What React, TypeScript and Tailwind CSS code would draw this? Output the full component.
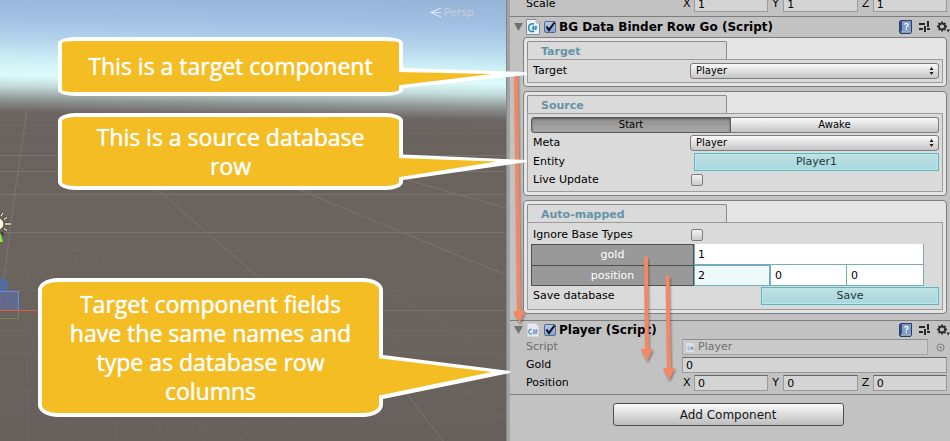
import { useId, type ReactNode } from "react";

const fieldClass =
  "h-4 w-full min-w-0 border border-[#9a9a9a] border-t-[#666666] bg-[#d4d4d4] px-[3px] text-[11px] leading-[14px] text-black outline-none";
const tealButton =
  "h-[18px] border border-[#5ab8bf] bg-linear-to-b from-[#c0dfe3] to-[#a6d9de] text-center text-[11px] leading-4 text-[#20393c] shadow-[inset_0_0_0_1px_#b9e8ea]";

function FoldoutArrow() {
  return (
    <svg width="9" height="8" viewBox="0 0 9 8" className="shrink-0" aria-hidden="true">
      <path d="M0 0H9L4.500 8Z" fill="#717171" />
    </svg>
  );
}

function ScriptIcon({ small = false }: { small?: boolean }) {
  return small ? (
    <svg width="12" height="14" viewBox="0 0 12 14" className="mx-px shrink-0" aria-hidden="true">
      <path d="M0.500 0.500H8.500L11.500 3.500V13.500H.5Z" fill="#e6eaee" stroke="#d2d6da" />
      <path d="M5 6.500C3.500 5.800 1.800 6.800 1.800 8.700S3.500 11.500 5 10.900" fill="none" stroke="#5b80c4" strokeWidth="1.200" />
      <path d="M7.300 6L6.700 11.500M9.500 6L8.900 11.500M5.800 7.800H10.700M5.500 9.800H10.400" stroke="#5b80c4" strokeWidth=".8" />
    </svg>
  ) : (
    <svg width="14" height="16" viewBox="0 0 14 16" className="shrink-0" aria-hidden="true">
      <path d="M.5.500H10L13.500 4V15.500H.5Z" fill="#edf2f5" stroke="#8a8f94" />
      <path d="M10 .5V4H13.500" fill="#cfd8de" stroke="#9aa2a8" strokeWidth=".7" />
      <path d="M8 5C5 3.800 2.600 6 2.600 9S5.200 13.400 8.200 12" fill="none" stroke="#2389bd" strokeWidth="1.500" />
      <path d="M7.500 6.500L7 11M10 6.500L9.500 11M6 8H11.500M5.700 9.800H11" stroke="#2389bd" strokeWidth="1" />
    </svg>
  );
}

function HeaderIcons() {
  return (
    <div className="ml-auto flex items-center gap-[7px]">
      <button type="button" aria-label="Help">
        <svg width="13" height="14" viewBox="0 0 13 14" className="block">
          <path d="M.5 1.500L2 .5H12.500V12L11.500 13.500H1.500L.5 12.500Z" fill="#35507c" stroke="#2b3f61" />
          <path d="M3 1H12V11.500H3Z" fill="#7d9cca" />
          <path d="M2 12H12" stroke="#e2e8f0" strokeWidth="1" />
          <path d="M5.500 4.500C5.800 2.800 9 2.900 9 4.700C9 6 7.300 6 7.300 7.700M7.300 8.700V10" fill="none" stroke="#fff" strokeWidth="1.300" />
        </svg>
      </button>
      <button type="button" aria-label="Presets">
        <svg width="11" height="12" viewBox="0 0 11 12" className="block" stroke="#262626">
          <path d="M0 3H6M0 8H4M8 8H11" strokeWidth="2" />
          <path d="M9 0V6M6 5V11" strokeWidth="2" />
        </svg>
      </button>
      <button type="button" aria-label="Settings">
        <svg width="13" height="12" viewBox="0 0 13 12" className="block">
          <circle cx="5" cy="5.500" r="3" fill="none" stroke="#2f2f2f" strokeWidth="1.800" />
          <path
            d="M5 .5V2.500M5 8.500V10.500M0 5.500H2M8 5.500H10M1.500 2L2.900 3.400M7.100 7.600L8.500 9M1.500 9L2.900 7.600M7.100 3.400L8.500 2"
            stroke="#2f2f2f"
            strokeWidth="1.800"
          />
          <path d="M9.500 8.500H13L11.200 11.500Z" fill="#2f2f2f" />
        </svg>
      </button>
    </div>
  );
}

function ComponentHeader({ title, icon, height }: { title: string; icon: ReactNode; height: string }) {
  const id = useId();
  return (
    <header className={`flex items-center pl-1 ${height}`}>
      <FoldoutArrow />
      <div className="ml-[3px] flex w-[14px] justify-center">{icon}</div>
      <span className="relative ml-1 size-3 shrink-0">
        <input
          id={id}
          type="checkbox"
          defaultChecked
          className="block size-3 appearance-none rounded-[2px] border border-[#56698c] bg-linear-to-b from-[#b4caec] to-[#7fa3db]"
        />
        <svg viewBox="0 0 12 12" className="pointer-events-none absolute inset-0" aria-hidden="true">
          <path d="M2.500 5.500L5 9L10.500 1.500" fill="none" stroke="#0c0c0c" strokeWidth="2" />
        </svg>
      </span>
      <label htmlFor={id} className="ml-[3px] text-[12px] leading-4 font-bold whitespace-nowrap text-black">
        {title}
      </label>
      <HeaderIcons />
    </header>
  );
}

function Section({ title, children }: { title: string; children: ReactNode }) {
  return (
    <section className="rounded-[4px] border border-[#7e7e7e] bg-[#e5e5e5] p-[3px]">
      <h2 className="h-[18px] w-[200px] rounded-t-[2px] border border-b-0 border-[#8c8c8c] bg-[#dadada] pt-[2px] pl-[13px] text-[11px] leading-4 font-bold text-[#6593a8]">
        {title}
      </h2>
      <div className="border border-[#9c9c9c] bg-[#dadada] p-[3px]">{children}</div>
    </section>
  );
}

function Row({ label, height, children }: { label: string; height: string; children: (id: string) => ReactNode }) {
  const id = useId();
  return (
    <div className={`grid grid-cols-[159px_1fr] items-center ${height}`}>
      <label htmlFor={id} className="pl-[2px] whitespace-nowrap">
        {label}
      </label>
      {children(id)}
    </div>
  );
}

function Dropdown({ id }: { id: string }) {
  return (
    <div className="relative">
      <select
        id={id}
        className="block h-4 w-full appearance-none rounded-[3px] border border-[#7c7c7c] bg-linear-to-b from-[#fafafa] to-[#c6c6c6] pl-[5px] text-[10px] leading-[14px] text-black"
      >
        <option>Player</option>
      </select>
      <svg width="5" height="8" viewBox="0 0 5 8" className="pointer-events-none absolute top-1 right-[5px]" aria-hidden="true">
        <path d="M2.500 0L4.500 3H.5ZM2.500 8L.5 5H4.500Z" fill="#1c1c1c" />
      </svg>
    </div>
  );
}

function EmptyCheck({ id }: { id: string }) {
  return (
    <input
      id={id}
      type="checkbox"
      className="ml-px block size-3 appearance-none rounded-[2px] border border-[#7d7d7d] bg-linear-to-b from-[#f4f4f4] to-[#cbcbcb]"
    />
  );
}

function PropertyRow({ label, htmlFor, dim, children }: { label: string; htmlFor?: string; dim?: boolean; children: ReactNode }) {
  return (
    <div className={`grid h-[18px] grid-cols-[156px_1fr] items-center pr-[3px] pl-4 ${dim ? "text-[#6f6f6f]" : ""}`}>
      <label htmlFor={htmlFor}>{label}</label>
      {children}
    </div>
  );
}

function Vector({ name, value }: { name: string; value: string }) {
  return (
    <div className="flex gap-[3px]">
      {["X", "Y", "Z"].map((axis) => (
        <label key={axis} className="flex flex-1 items-center">
          <span className="w-3 shrink-0 pl-px">{axis}</span>
          <input aria-label={`${name} ${axis}`} defaultValue={value} className={fieldClass} />
        </label>
      ))}
    </div>
  );
}

function Inspector() {
  return (
    <aside className="w-[440px] shrink-0 overflow-hidden bg-[#c2c2c2] text-[11px] leading-4 text-black">
      <div className="-mt-[5px] border-b border-[#7d7d7d] pb-[3px]">
        <PropertyRow label="Scale">
          <Vector name="Scale" value="1" />
        </PropertyRow>
      </div>

      <ComponentHeader title="BG Data Binder Row Go (Script)" icon={<ScriptIcon />} height="h-5" />
      <div className="flex flex-col gap-1 pr-[3px] pb-[6px] pl-[13px]">
        <Section title="Target">
          <Row label="Target" height="h-4">
            {(id) => <Dropdown id={id} />}
          </Row>
        </Section>

        <Section title="Source">
          <div className="flex h-4 text-[10px] leading-[14px]">
            <button type="button" aria-pressed="true" className="w-[200px] rounded-l-[3px] border border-[#5c5c5c] bg-linear-to-b from-[#8f8f8f] to-[#a9a9a9] shadow-[inset_0_1px_2px_#555555]">
              Start
            </button>
            <button type="button" className="flex-1 rounded-r-[3px] border border-l-0 border-[#7c7c7c] bg-linear-to-b from-[#fafafa] to-[#c6c6c6]">
              Awake
            </button>
          </div>
          <Row label="Meta" height="h-[19px]">
            {(id) => <Dropdown id={id} />}
          </Row>
          <Row label="Entity" height="h-[19px]">
            {(id) => (
              <button id={id} type="button" className={`ml-1 ${tealButton}`}>
                Player1
              </button>
            )}
          </Row>
          <Row label="Live Update" height="h-[17px]">
            {(id) => <EmptyCheck id={id} />}
          </Row>
        </Section>

        <Section title="Auto-mapped">
          <Row label="Ignore Base Types" height="h-[18px]">
            {(id) => <EmptyCheck id={id} />}
          </Row>
          <div className="mr-[15px] grid grid-cols-[163px_77px_76px_1fr]">
            <label htmlFor="gold" className="h-[21px] border border-b-0 border-[#4f4f4f] bg-[#999999] pt-[2px] text-center text-white">
              gold
            </label>
            <input id="gold" defaultValue="1" className="col-span-3 h-[21px] min-w-0 border-r border-b border-l border-[#74adbb] bg-white px-[3px]" />
            <label htmlFor="position" className="h-[21px] border border-[#4f4f4f] bg-[#999999] pt-[2px] text-center text-white">
              position
            </label>
            <input id="position" defaultValue="2" className="h-[21px] min-w-0 border border-r-2 border-[#74adbb] bg-[#eef9fa] px-[3px]" />
            <input aria-label="position y" defaultValue="0" className="h-[21px] min-w-0 border-r border-b border-[#74adbb] bg-white px-1" />
            <input aria-label="position z" defaultValue="0" className="h-[21px] min-w-0 border-r border-b border-[#74adbb] bg-white px-1" />
          </div>
          <Row label="Save database" height="h-5">
            {(id) => (
              <button id={id} type="button" className={`ml-auto w-[178px] ${tealButton}`}>
                Save
              </button>
            )}
          </Row>
        </Section>
      </div>

      <div className="border-y border-[#7d7d7d] pb-[2px]">
        <ComponentHeader title="Player (Script)" icon={<ScriptIcon small />} height="h-[17px]" />
        <PropertyRow label="Script" htmlFor="script" dim>
          <div className="flex items-center">
            <div className="flex h-4 flex-1 items-center border border-[#a5a5a5] border-t-[#8e8e8e] bg-[#cacaca] pl-[3px]">
              <svg width="8" height="9" viewBox="0 0 8 9" aria-hidden="true">
                <path d="M0 0H6L8 2V9H0Z" fill="#dbe0e5" />
                <path d="M3.500 4H2V6.500H3.500M5 3.500V7M6.500 3.500V7M4.300 4.500H7.500M4.300 6H7.500" fill="none" stroke="#7f9ac9" strokeWidth=".8" />
              </svg>
              <input id="script" disabled defaultValue="Player" className="min-w-0 flex-1 bg-transparent pl-1" />
            </div>
            <button type="button" aria-label="Pick script" className="mr-[2px] ml-2">
              <svg width="9" height="9" viewBox="0 0 9 9" className="block">
                <circle cx="4.500" cy="4.500" r="3.500" fill="none" stroke="#737373" strokeWidth=".9" />
                <circle cx="4.500" cy="4.500" r="1" fill="#666" />
              </svg>
            </button>
          </div>
        </PropertyRow>
        <PropertyRow label="Gold" htmlFor="player-gold">
          <input id="player-gold" defaultValue="0" className={fieldClass} />
        </PropertyRow>
        <PropertyRow label="Position">
          <Vector name="Position" value="0" />
        </PropertyRow>
      </div>

      <div className="flex justify-center pt-2 pr-1 pb-3">
        <button
          type="button"
          className="h-[23px] w-[231px] rounded-[3px] border border-[#4e4e4e] bg-linear-to-b from-[#fbfbfb] to-[#bdbdbd] text-[12px] leading-5 text-[#161616]"
        >
          Add Component
        </button>
      </div>
    </aside>
  );
}

function SceneView() {
  return (
    <main className="relative min-w-0 flex-1 overflow-hidden bg-[linear-gradient(181deg,#96b4d8_0px,#a2c0e4_26px,#b4d4ec_48px,#cdeff6_68px,#dcfbfa_84px,#c4dedd_94px,#8f9594_108px,#6c6764_120px,#6a625e_132px,#6b645e_260px,#67605c_445px)]">
      <svg className="absolute inset-0 h-full w-full" aria-hidden="true">
        <g fill="none" stroke="#8b8a88" strokeWidth="1" opacity=".45">
          <path d="M0 155.500H506M0 171.500H506M0 194.500H506M0 232.500H506M0 310.500H506" />
          <path d="M27 110L14 200L0 310M158 190L258 277M398 382L443 441M300 190L372 220L506 275M400 178L506 208" />
        </g>
        <g fill="none" stroke="#8b8a88" strokeWidth="1" opacity=".14">
          <path d="M0 125.500H506M0 133.500H506M0 144.500H506M0 250.500H506M0 270.500H506M0 290.500H506M0 331.500H506M0 352.500H506M0 389.500H506" />
          <path d="M27 260V441M50 260L72 441M75 255L118 441M100 250L165 441M124 250L205 441M240 415L250 441M285 415L297 441M383 330L506 420M383 290L506 360" />
        </g>
        <path d="M0 310.500H40" stroke="#d95c43" />
        <circle cx="1" cy="285" r="7" fill="#546d9f" />
        <path d="M-1 291.500H18.500V310" fill="#616894" stroke="#6289e6" />
        <path d="M0 292H18V310H0Z" fill="#646a91" opacity=".8" />
        <path d="M0 318.500H18.500V311" fill="none" stroke="#71894f" />
        <path d="M0 232L3 242H0Z" fill="#83f02f" />
        <circle cx="-2" cy="224" r="6" fill="#f8f2d6" stroke="#4a453e" />
        <path d="M5 224H11M4 219.500L7 217.500M4 228.500L7 230.500M1 216L3 213M1 232L4 235" stroke="#49443f" strokeWidth="3" />
        <path d="M5 224H11M4 219.500L7 217.500M4 228.500L7 230.500M1 216L3 213" stroke="#f5edcf" strokeWidth="1.300" />
        <path d="M441 8L431 12.500L441 17M431 12.500H441" fill="none" stroke="#d8e9f7" strokeWidth="1.200" />
      </svg>
      <span className="absolute top-[5px] right-8 text-[11px] leading-4 text-[#c5ced6]">Persp</span>
    </main>
  );
}

function Callout({ className, outer, inner, children }: { className: string; outer: string; inner: string; children: ReactNode }) {
  return (
    <div
      className={`absolute flex w-[345px] items-center justify-center border-4 border-white bg-[#f4bd24] px-6 text-center font-['Open_Sans','Noto_Sans',sans-serif] text-[23px] leading-[29px] text-white [text-shadow:0_0_1px_#ffffff] ${className}`}
    >
      {children}
      <svg width="130" height="50" className="absolute top-0 left-full overflow-visible" aria-hidden="true">
        <path d={outer} fill="#ffffff" />
        <path d={inner} fill="#f4bd24" />
      </svg>
    </div>
  );
}

function Annotations() {
  return (
    <div className="pointer-events-none absolute top-0 right-0 h-full w-[950px]">
      <svg className="absolute inset-0 h-full w-full drop-shadow-[1px_2px_1px_rgba(0,0,0,0.35)]" aria-hidden="true">
        <g fill="#f58863">
          <path d="M514 72H518L521 311H525L519.500 323L513 311H517Z" />
          <path d="M644 257H648L649 349H653L647 361L641 349H645Z" />
          <path d="M665.500 276H669.500L671 368H675L669 380L663 368H667Z" />
        </g>
      </svg>
      <Callout className="top-[37px] left-[58px] h-[59px] rounded-[18px/6px]" outer="M0 27L4 27L128 31V34L4 47L0 47Z" inner="M-2 31L93 33L-2 44.500Z">
        This is a target component
      </Callout>
      <Callout className="top-[113px] left-[58px] h-[77px] rounded-[18px/8px]" outer="M0 37L4 37.500L128 43V45L4 63L0 63Z" inner="M-2 41L98 44.500L-2 60.500Z">
        This is a source database row
      </Callout>
      <Callout className="top-[278px] left-[38px] h-[139px] rounded-[20px/12px]" outer="M0 72L4 73L131 89V91L4 117L0 117Z" inner="M-2 76L113 90L-2 114Z">
        Target component fields have the same names and type as database row columns
      </Callout>
    </div>
  );
}

export default function App() {
  return (
    <div className="relative flex min-h-screen overflow-hidden font-['DejaVu_Sans',sans-serif]">
      <SceneView />
      <div className="w-1 shrink-0 border-l border-[#858585] bg-[#a3a3a3]" />
      <Inspector />
      <Annotations />
    </div>
  );
}
